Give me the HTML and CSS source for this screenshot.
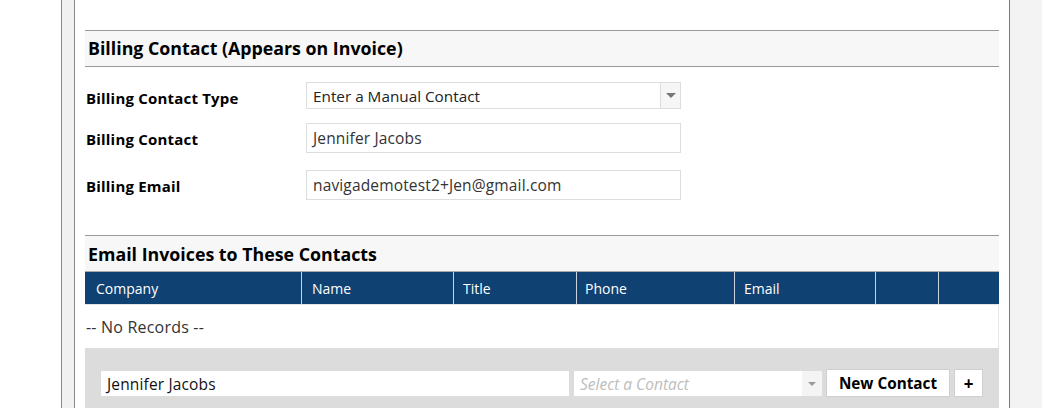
FILE: index.html
```html
<!DOCTYPE html>
<html>
<head>
<meta charset="utf-8">
<link rel="stylesheet" href="styles.css">
</head>
<body>
<div class="page">
  <div class="outer-left"></div>
  <div class="frame">
    <div class="content">
      <div class="section-head first">Billing Contact (Appears on Invoice)</div>
      <div class="form">
        <div class="row r1">
          <label class="label">Billing Contact Type</label>
          <div class="select">
            <span class="select-text">Enter a Manual Contact</span>
            <span class="select-btn"><span class="caret"></span></span>
          </div>
        </div>
        <div class="row r2">
          <label class="label">Billing Contact</label>
          <div class="input">Jennifer Jacobs</div>
        </div>
        <div class="row r3">
          <label class="label">Billing Email</label>
          <div class="input">navigademotest2+Jen@gmail.com</div>
        </div>
      </div>
      <div class="section-head second">Email Invoices to These Contacts</div>
      <div class="table">
        <div class="thead">
          <div class="th c1">Company</div>
          <div class="th c2">Name</div>
          <div class="th c3">Title</div>
          <div class="th c4">Phone</div>
          <div class="th c5">Email</div>
          <div class="th c6"></div>
          <div class="th c7"></div>
        </div>
        <div class="empty">-- No Records --</div>
        <div class="add-bar">
          <div class="add-input">Jennifer Jacobs</div>
          <div class="add-select">
            <span class="placeholder">Select a Contact</span>
            <span class="add-select-btn"><span class="caret small"></span></span>
          </div>
          <div class="btn new">New Contact</div>
          <div class="btn plus">+</div>
        </div>
      </div>
    </div>
  </div>
  <div class="outer-right"></div>
</div>
</body>
</html>
```
FILE: styles.css
```css
* { box-sizing: border-box; }
html, body { margin: 0; padding: 0; }
body {
  background: #ffffff;
  font-family: "Open Sans", "Noto Sans", sans-serif;
  color: #000;
  width: 1042px;
  height: 408px;
  overflow: hidden;
}
.page {
  display: flex;
  height: 408px;
}
.outer-left {
  width: 61px;
  flex: none;
  background: #fff;
}
.frame {
  flex: none;
  border-left: 1px solid #8a8a8a;
  background: #f1f1f1;
  padding-left: 12px;
  display: flex;
}
.content {
  width: 936px;
  border-left: 1px solid #8a8a8a;
  border-right: 1px solid #7a7a7a;
  background: #fff;
  padding: 30px 10px 0 10px;
}
.outer-right {
  flex: 1;
  background: #f3f3f3;
}
.section-head {
  border-top: 1px solid #999;
  border-bottom: 1px solid #999;
  background: #f7f7f7;
  height: 37px;
  padding-left: 3px;
  font-weight: 700;
  font-size: 17.8px;
  line-height: 35px;
  white-space: nowrap;
}
.form {
  padding-top: 15px;
}
.row {
  display: flex;
  align-items: center;
}
.label {
  width: 221px;
  flex: none;
  padding-left: 1px;
  font-weight: 700;
  font-size: 15px;
  letter-spacing: 0.2px;
  position: relative;
  white-space: nowrap;
}
.r1 { height: 27px; }
.r1 .label { top: 2px; }
.r2 { height: 30px; margin-top: 14px; }
.r2 .label { top: 1px; }
.r3 { height: 30px; margin-top: 17px; }
.r3 .label { top: 1px; }
.select {
  width: 375px;
  height: 27px;
  border: 1px solid #ddd;
  display: flex;
  align-items: stretch;
  font-size: 15.3px;
  color: #222;
}
.select-text {
  flex: 1;
  padding-left: 6px;
  line-height: 27px;
  white-space: nowrap;
}
.select-btn {
  width: 20px;
  border-left: 1px solid #ddd;
  background: #f6f6f6;
  display: flex;
  align-items: center;
  justify-content: center;
}
.caret {
  width: 0;
  height: 0;
  border-left: 5px solid transparent;
  border-right: 5px solid transparent;
  border-top: 5px solid #777;
}
.caret.small {
  border-left-width: 4px;
  border-right-width: 4px;
  border-top-width: 4px;
  border-top-color: #999;
}
.input {
  width: 375px;
  height: 30px;
  border: 1px solid #ddd;
  padding-left: 6px;
  font-size: 15.5px;
  letter-spacing: 0.15px;
  line-height: 29px;
  color: #333;
  white-space: nowrap;
}
.section-head.second {
  margin-top: 35px;
  height: 37px;
  line-height: 36px;
  border-bottom-color: #aaa;
}
.thead {
  display: flex;
  background: #0f4172;
  height: 33px;
  border-bottom: 1px solid #e4e4e4;
}
.th {
  color: #fff;
  font-size: 14px;
  line-height: 32px;
  padding-top: 1px;
  padding-left: 10px;
  border-right: 1px solid #c9d3de;
}
.c1 { width: 217px; padding-left: 11px; }
.c2 { width: 152px; }
.c3 { width: 123px; padding-left: 9px; }
.c4 { width: 158px; padding-left: 8px; }
.c5 { width: 141px; padding-left: 9px; }
.c6 { width: 63px; }
.c7 { flex: 1; border-right: none; }
.empty {
  height: 43px;
  line-height: 44px;
  font-size: 16px;
  letter-spacing: 0.2px;
  color: #333;
  padding-left: 1px;
  border-right: 1px solid #e8e8e8;
}
.add-bar {
  background: #dcdcdc;
  height: 70px;
  display: flex;
  align-items: flex-start;
  padding: 21px 0 0 16px;
}
.add-input {
  width: 468px;
  height: 25px;
  margin-top: 2px;
  background: #fff;
  padding-left: 6px;
  font-size: 15.5px;
  letter-spacing: 0.15px;
  line-height: 27px;
  color: #111;
  white-space: nowrap;
}
.add-select {
  margin-left: 5px;
  margin-top: 2px;
  width: 248px;
  height: 25px;
  display: flex;
  background: #fff;
}
.placeholder {
  flex: 1;
  padding-left: 6px;
  font-style: italic;
  font-size: 15.5px;
  line-height: 27px;
  color: #bdbdbd;
  white-space: nowrap;
}
.add-select-btn {
  width: 20px;
  background: #f4f4f4;
  display: flex;
  align-items: center;
  justify-content: center;
}
.btn {
  height: 28px;
  background: #fff;
  border: 1px solid #cfcfcf;
  font-weight: 700;
  font-size: 15.3px;
  line-height: 27px;
  text-align: center;
  margin-left: 4px;
  white-space: nowrap;
}
.btn.new { width: 124px; }
.btn.plus { width: 29px; font-size: 17px; }
```
